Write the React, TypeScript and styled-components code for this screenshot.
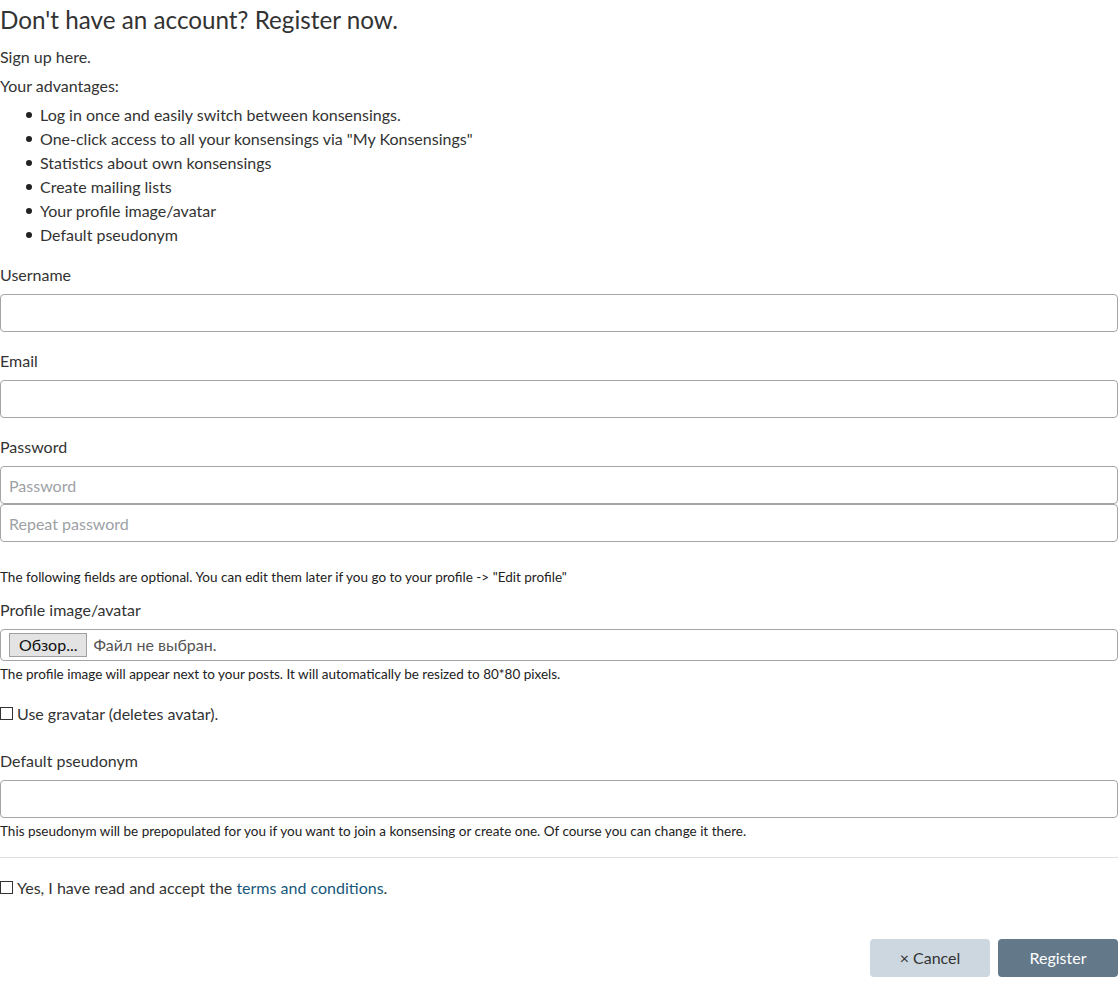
import React from "react";
import styled, { createGlobalStyle } from "styled-components";

const Global = createGlobalStyle`
  html, body { margin: 0; padding: 0; background: #fff; }
  body {
    font-family: "Lato", "Noto Sans", sans-serif;
    font-size: 16px;
    line-height: 1.5;
    color: #333;
  }
  * { box-sizing: border-box; }
`;

const Page = styled.div`
  width: 1118px;
`;

const Title = styled.h1`
  margin: 5px 0 11px;
  font-size: 24.25px;
  font-weight: 400;
  line-height: 1.2;
  color: #333;
`;

const Para = styled.p`
  margin: 0 0 5px;
`;

const List = styled.ul`
  margin: 0 0 16px;
  padding-left: 40px;
  list-style: none;
`;

const Item = styled.li`
  line-height: 24px;
  &::before {
    content: "";
    display: inline-block;
    width: 6px;
    height: 6px;
    border-radius: 50%;
    background: #222;
    margin-left: -14px;
    margin-right: 8px;
    vertical-align: 3px;
  }
`;

const Group = styled.div<{ $mb?: number }>`
  margin-bottom: ${(p) => (p.$mb ?? 17)}px;
`;

const Label = styled.label`
  display: block;
  margin-bottom: 7px;
`;

const Input = styled.input`
  display: block;
  width: 100%;
  height: 38px;
  padding: 6px 8px;
  font: inherit;
  color: #333;
  border: 1px solid #a5a5a5;
  border-radius: 4px;
  background: #fff;
  outline: none;
  &::placeholder { color: #9da1a5; }
`;

const Small = styled.div<{ $mt?: number }>`
  font-size: 13.5px;
  line-height: 19.2px;
  margin-top: ${(p) => (p.$mt ?? 4)}px;
  color: #222;
`;

const FileBox = styled.div`
  display: flex;
  align-items: center;
  gap: 6px;
  height: 32px;
  padding: 0 8px;
  border: 1px solid #a5a5a5;
  border-radius: 4px;
`;

const FileButton = styled.span`
  display: inline-flex;
  align-items: center;
  height: 24px;
  padding: 0 9px;
  background: #e3e3e3;
  border: 1px solid #a0a0a0;
  color: #111;
  font-size: 16px;
`;

const FileText = styled.span`
  color: #555;
`;

const CheckRow = styled.label`
  display: flex;
  align-items: center;
  gap: 4px;
`;

const Box = styled.span`
  width: 13px;
  height: 13px;
  border: 1px solid #333;
  background: #fff;
  flex: none;
`;

const Link = styled.a`
  color: #17587a;
  text-decoration: none;
`;

const Rule = styled.hr`
  margin: 16px 0 18px;
  border: 0;
  border-top: 1px solid #dedede;
`;

const Actions = styled.div`
  display: flex;
  justify-content: flex-end;
  gap: 8px;
  margin-top: 39px;
`;

const Btn = styled.button<{ $primary?: boolean }>`
  width: 120px;
  height: 38px;
  border: 0;
  border-radius: 4px;
  font: inherit;
  background: ${(p) => (p.$primary ? "#637889" : "#cdd7e0")};
  color: ${(p) => (p.$primary ? "#fff" : "#333")};
`;

const advantages = [
  "Log in once and easily switch between konsensings.",
  'One-click access to all your konsensings via "My Konsensings"',
  "Statistics about own konsensings",
  "Create mailing lists",
  "Your profile image/avatar",
  "Default pseudonym",
];

export default function App() {
  return (
    <Page>
      <Global />
      <Title>Don't have an account? Register now.</Title>
      <Para>Sign up here.</Para>
      <Para>Your advantages:</Para>
      <List>
        {advantages.map((a) => (
          <Item key={a}>{a}</Item>
        ))}
      </List>
      <Group>
        <Label>Username</Label>
        <Input />
      </Group>
      <Group>
        <Label>Email</Label>
        <Input />
      </Group>
      <Group>
        <Label>Password</Label>
        <Input placeholder="Password" />
        <Input placeholder="Repeat password" />
      </Group>
      <Group $mb={11}>
        <Small $mt={26}>
          The following fields are optional. You can edit them later if you go to your profile -&gt; "Edit profile"
        </Small>
      </Group>
      <Group>
        <Label>Profile image/avatar</Label>
        <FileBox>
          <FileButton>Обзор...</FileButton>
          <FileText>Файл не выбран.</FileText>
        </FileBox>
        <Small>The profile image will appear next to your posts. It will automatically be resized to 80*80 pixels.</Small>
      </Group>
      <Group $mb={23}>
        <CheckRow>
          <Box />
          Use gravatar (deletes avatar).
        </CheckRow>
      </Group>
      <Group $mb={0}>
        <Label>Default pseudonym</Label>
        <Input />
        <Small>This pseudonym will be prepopulated for you if you want to join a konsensing or create one. Of course you can change it there.</Small>
      </Group>
      <Rule />
      <CheckRow>
        <Box />
        <span>
          Yes, I have read and accept the <Link href="#">terms and conditions</Link>.
        </span>
      </CheckRow>
      <Actions>
        <Btn>× Cancel</Btn>
        <Btn $primary>Register</Btn>
      </Actions>
    </Page>
  );
}
